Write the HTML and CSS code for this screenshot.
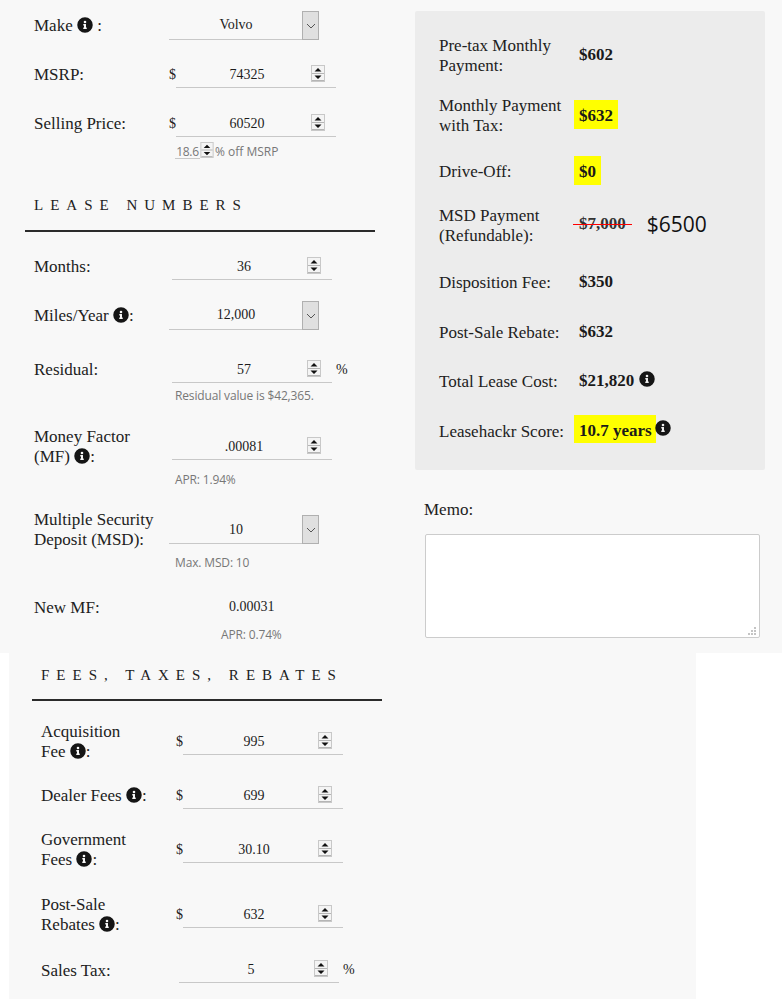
FILE: index.html
```html
<!DOCTYPE html>
<html lang="en">
<head>
<meta charset="utf-8">
<title>Lease calculator</title>
<link rel="stylesheet" href="styles.css">
</head>
<body>
<svg class="defs" width="0" height="0" aria-hidden="true">
  <symbol id="info" viewBox="0 0 512 512"><path fill-rule="evenodd" d="M256 8a248 248 0 1 0 0 496 248 248 0 0 0 0-496zm0 110a42 42 0 1 1 0 84 42 42 0 0 1 0-84zm56 254c0 7-5 12-12 12h-88c-7 0-12-5-12-12v-24c0-7 5-12 12-12h12v-64h-12c-7 0-12-5-12-12v-24c0-7 5-12 12-12h64c7 0 12 5 12 12v100h12c7 0 12 5 12 12z"/></symbol>
  <symbol id="spin" viewBox="0 0 14 17"><rect width="14" height="17" fill="#efefef"/><rect x="1" y="1" width="12" height="7" fill="#f4f4f4"/><rect x="1" y="9" width="12" height="7" fill="#f4f4f4"/><rect x="1" y="8" width="12" height="1" fill="#b5b5b5"/><rect x="1" y="15" width="12" height="1" fill="#b5b5b5"/><rect x="0.5" y="0.5" width="13" height="16" fill="none" stroke="#c8c8c8"/><path d="M7 3 10.5 6.5h-7zM7 14 3.500 10.500h7z" fill="#111"/></symbol>
  <symbol id="chev" viewBox="0 0 16 32"><path d="M4 14l4 4 4-4" fill="none" stroke="#555" stroke-width="1"/></symbol>
</svg>

<main class="top">
  <section class="left">
    <div class="row r-make">
      <div class="lbl">Make <svg class="i"><use href="#info"/></svg> :</div>
      <div class="select"><span class="sv">Volvo</span><span class="arrow"><svg class="chev"><use href="#chev"/></svg></span></div>
    </div>
    <div class="row r-msrp">
      <div class="lbl">MSRP:</div>
      <div class="dollar">$</div>
      <div class="num"><span class="nv">74325</span><svg class="spin"><use href="#spin"/></svg></div>
    </div>
    <div class="row r-sell">
      <div class="lbl">Selling Price:</div>
      <div class="dollar">$</div>
      <div class="num"><span class="nv">60520</span><svg class="spin"><use href="#spin"/></svg></div>
    </div>
    <div class="off"><span class="offv">18.6</span><svg class="spin"><use href="#spin"/></svg><span class="offt">% off MSRP</span></div>

    <h2 class="head lease">LEASE NUMBERS</h2>

    <div class="row r-months">
      <div class="lbl">Months:</div>
      <div class="num mid"><span class="nv">36</span><svg class="spin"><use href="#spin"/></svg></div>
    </div>
    <div class="row r-miles">
      <div class="lbl">Miles/Year <svg class="i"><use href="#info"/></svg>:</div>
      <div class="select"><span class="sv">12,000</span><span class="arrow"><svg class="chev"><use href="#chev"/></svg></span></div>
    </div>
    <div class="row r-res">
      <div class="lbl">Residual:</div>
      <div class="num mid"><span class="nv">57</span><svg class="spin"><use href="#spin"/></svg></div>
      <div class="pct">%</div>
    </div>
    <div class="note n-res">Residual value is $42,365.</div>
    <div class="row two r-mf">
      <div class="lbl">Money Factor<br>(MF) <svg class="i"><use href="#info"/></svg>:</div>
      <div class="num mid"><span class="nv">.00081</span><svg class="spin"><use href="#spin"/></svg></div>
    </div>
    <div class="note n-mf">APR: 1.94%</div>
    <div class="row two r-msd">
      <div class="lbl">Multiple Security<br>Deposit (MSD):</div>
      <div class="select"><span class="sv">10</span><span class="arrow"><svg class="chev"><use href="#chev"/></svg></span></div>
    </div>
    <div class="note n-msd">Max. MSD: 10</div>
    <div class="row r-new">
      <div class="lbl">New MF:</div>
      <div class="newv">0.00031</div>
    </div>
    <div class="note n-new">APR: 0.74%</div>
  </section>

  <section class="right">
    <div class="panel">
      <div class="res h2l"><div class="rl">Pre-tax Monthly<br>Payment:</div><div class="rv">$602</div></div>
      <div class="res h2l"><div class="rl">Monthly Payment<br>with Tax:</div><div class="rv hl">$632</div></div>
      <div class="res h1l"><div class="rl">Drive-Off:</div><div class="rv hl">$0</div></div>
      <div class="res h2l msd"><div class="rl">MSD Payment<br>(Refundable):</div><div class="rv"><span class="strike">$7,000</span></div><div class="big">$6500</div></div>
      <div class="res h1l"><div class="rl">Disposition Fee:</div><div class="rv">$350</div></div>
      <div class="res h1l"><div class="rl">Post-Sale Rebate:</div><div class="rv">$632</div></div>
      <div class="res h1l"><div class="rl">Total Lease Cost:</div><div class="rv">$21,820 <svg class="i"><use href="#info"/></svg></div></div>
      <div class="res h1l score"><div class="rl">Leasehackr Score:</div><div class="rv hl">10.7 years</div><svg class="i after"><use href="#info"/></svg></div>
    </div>
    <div class="memo-l">Memo:</div>
    <div class="memo-wrap">
      <textarea class="memo" aria-label="Memo"></textarea>
      <svg class="grip" width="9" height="9" viewBox="0 0 9 9" aria-hidden="true"><path d="M6 0h2v2H6zM3 3h2v2H3zM6 3h2v2H6zM0 6h2v2H0zM3 6h2v2H3zM6 6h2v2H6z" fill="#c4c4c4"/></svg>
    </div>
  </section>
</main>

<section class="bottom">
  <h2 class="head fees">FEES, TAXES, REBATES</h2>
  <div class="row two b-acq">
    <div class="lbl">Acquisition<br>Fee <svg class="i"><use href="#info"/></svg>:</div>
    <div class="dollar">$</div>
    <div class="num"><span class="nv">995</span><svg class="spin"><use href="#spin"/></svg></div>
  </div>
  <div class="row b-deal">
    <div class="lbl">Dealer Fees <svg class="i"><use href="#info"/></svg>:</div>
    <div class="dollar">$</div>
    <div class="num"><span class="nv">699</span><svg class="spin"><use href="#spin"/></svg></div>
  </div>
  <div class="row two b-gov">
    <div class="lbl">Government<br>Fees <svg class="i"><use href="#info"/></svg>:</div>
    <div class="dollar">$</div>
    <div class="num"><span class="nv">30.10</span><svg class="spin"><use href="#spin"/></svg></div>
  </div>
  <div class="row two b-post">
    <div class="lbl">Post-Sale<br>Rebates <svg class="i"><use href="#info"/></svg>:</div>
    <div class="dollar">$</div>
    <div class="num"><span class="nv">632</span><svg class="spin"><use href="#spin"/></svg></div>
  </div>
  <div class="row b-tax">
    <div class="lbl">Sales Tax:</div>
    <div class="num mid"><span class="nv">5</span><svg class="spin"><use href="#spin"/></svg></div>
    <div class="pct">%</div>
  </div>
</section>
</body>
</html>
```

FILE: styles.css
```css
* { box-sizing: border-box; }
html, body { margin: 0; padding: 0; background: #fff; }
body { width: 782px; height: 999px; overflow: hidden; font-family: "Liberation Serif", "Times New Roman", serif; font-size: 17px; line-height: 20px; color: #212121; }
.defs { position: absolute; }
.top { display: flex; height: 653px; background: #f8f8f8; }
.left { width: 415px; padding: 0 0 0 34px; }
.right { width: 367px; padding-top: 11px; }
.row { display: flex; align-items: flex-end; }
.lbl { width: 135px; flex: none; padding-bottom: 3px; }
.i { width: 16px; height: 16px; fill: #151515; vertical-align: -2px; }

.select { width: 150px; height: 29px; border-bottom: 1px solid #c8c8c8; display: flex; position: relative; flex: none; }
.sv { flex: 1; text-align: center; font-size: 14px; line-height: 20px; padding: 4px 16px 0 0; color: #1c1c1c; }
.arrow { width: 17px; height: 29px; background: #e0e0e0; border: 1.5px solid #b0b0b0; position: absolute; right: 0; top: 0; }
.chev { position: absolute; left: 0; top: -2px; width: 16px; height: 32px; }

.dollar { width: 7px; flex: none; font-size: 14px; line-height: 20px; padding-top: 2px; height: 25px; }
.num { width: 160px; height: 25px; border-bottom: 1px solid #c8c8c8; position: relative; flex: none; }
.nv { display: block; width: 142px; padding-top: 2px; text-align: center; font-size: 14px; line-height: 20px; color: #1c1c1c; }
.mid .nv { width: 144px; }
.spin { position: absolute; left: 135px; top: 2px; width: 14px; height: 17px; }
.mid { margin-left: 3px; }
.pct { font-size: 14px; margin-left: 4px; padding-bottom: 3px; }

.two { align-items: flex-start; height: 40px; }
.two .lbl { padding: 1px 0 0; }
.two .num { margin-top: 8px; }
.two .dollar { margin-top: 8px; }

.r-make { padding-top: 11px; height: 40px; }
.r-make .lbl, .r-miles .lbl { padding-bottom: 4px; }
.r-msrp { margin-top: 23px; height: 25px; }
.r-sell { margin-top: 24px; height: 25px; }
.off { display: flex; align-items: flex-end; margin: 5px 0 0 141px; height: 17px; font-family: "Open Sans", sans-serif; font-size: 12px; color: #777; line-height: 16px; }
.offv { width: 25px; height: 17px; line-height: 19px; border-bottom: 1px solid #c8c8c8; text-align: center; letter-spacing: -.3px; }
.off .spin { position: static; width: 14px; height: 16px; margin-bottom: 1px; }
.offt { margin: 0 0 -1px 1px; }

.head { margin: 0; font-weight: 400; font-size: 15px; line-height: 20px; letter-spacing: 7px; color: #212121; }
.lease { margin: 36px 6px 0 -9px; padding: 0 0 15px 9px; width: 350px; border-bottom: 2px solid #2b2b2b; }
.r-months { margin-top: 22px; height: 26px; }
.r-miles { margin-top: 21px; height: 29px; }
.r-res { margin-top: 28px; height: 25px; }

.note { font-family: "Open Sans", sans-serif; font-size: 12px; line-height: 16px; color: #777; margin-left: 141px; letter-spacing: -.15px; }
.n-res { margin-top: 5px; }
.r-mf { margin-top: 22px; }
.r-mf .num { margin-top: 9px; }
.n-mf { margin-top: 6px; }
.r-msd { margin-top: 21px; }
.r-msd .select { margin-top: 6px; }
.r-msd .sv { padding-top: 5px; }
.n-msd { margin-top: 6px; }
.r-new { margin-top: 27px; height: 20px; }
.r-new .lbl { padding-bottom: 0; }
.newv { padding-left: 60px; font-size: 14px; line-height: 20px; color: #1c1c1c; margin-top: -1px; align-self: flex-start; }
.n-new { margin: 9px 0 0 187px; }

.panel { width: 350px; height: 459px; background: #ececec; border-radius: 2px; padding: 25px 0 0 24px; }
.res { display: flex; align-items: center; position: relative; }
.rl { width: 135px; flex: none; }
.rv { font-weight: 700; padding: 0 5px; font-size: 17px; line-height: 20px; color: #1a1a1a; white-space: nowrap; margin-bottom: 2px; }
.rv .i { vertical-align: -1px; margin-left: 0; }
.hl { background: #ff0; height: 29px; line-height: 32px; margin-bottom: 0; }
.h2l { height: 40px; }
.h1l { height: 29px; }
.h2l .hl { margin-bottom: 3px; }
.res:nth-child(2) { margin-top: 20px; }
.res:nth-child(3) { margin-top: 20px; }
.res:nth-child(3) .rl { padding-top: 2px; }
.res:nth-child(4) { margin-top: 21px; }
.res:nth-child(5) { margin-top: 22px; }
.res:nth-child(6) { margin-top: 21px; }
.res:nth-child(7) { margin-top: 20px; }
.res:nth-child(8) { margin-top: 19px; }
.msd .rv { margin-bottom: 4px; }
.strike { position: relative; color: #333; }
.strike::after { content: ""; position: absolute; left: -6px; right: -6px; top: 10px; height: 1px; background: #f00; }
.big { font-family: "Open Sans", sans-serif; font-size: 21px; margin: 0 0 4px 16px; color: #111; line-height: 28px; }
.score { height: 28px; }
.score .rl { padding-top: 6px; }
.score .hl { height: 28px; line-height: 31px; padding-right: 4px; }
.after { position: relative; top: -1px; left: -1px; }

.memo-l { margin: 30px 0 0 9px; height: 20px; }
.memo-wrap { position: relative; width: 335px; height: 104px; margin: 14px 0 0 10px; }
.memo { display: block; width: 335px; height: 104px; background: #fff; border: 1px solid #ccc; border-radius: 2px; padding: 0; resize: none; }
.grip { position: absolute; right: 3px; bottom: 2px; }

.bottom { margin-left: 9px; width: 687px; height: 346px; background: #f8f8f8; padding: 12px 0 0 32px; }
.bottom .two .lbl { padding-top: 0; }
.fees { margin: 0 0 0 -9px; padding: 0 0 14px 9px; width: 350px; border-bottom: 2px solid #2b2b2b; }
.b-acq { margin-top: 21px; }
.b-deal { margin-top: 22px; height: 25px; }
.b-gov { margin-top: 21px; }
.b-post { margin-top: 25px; }
.b-tax { margin-top: 23px; height: 25px; }
.b-tax .lbl { padding-bottom: 2px; }
```
